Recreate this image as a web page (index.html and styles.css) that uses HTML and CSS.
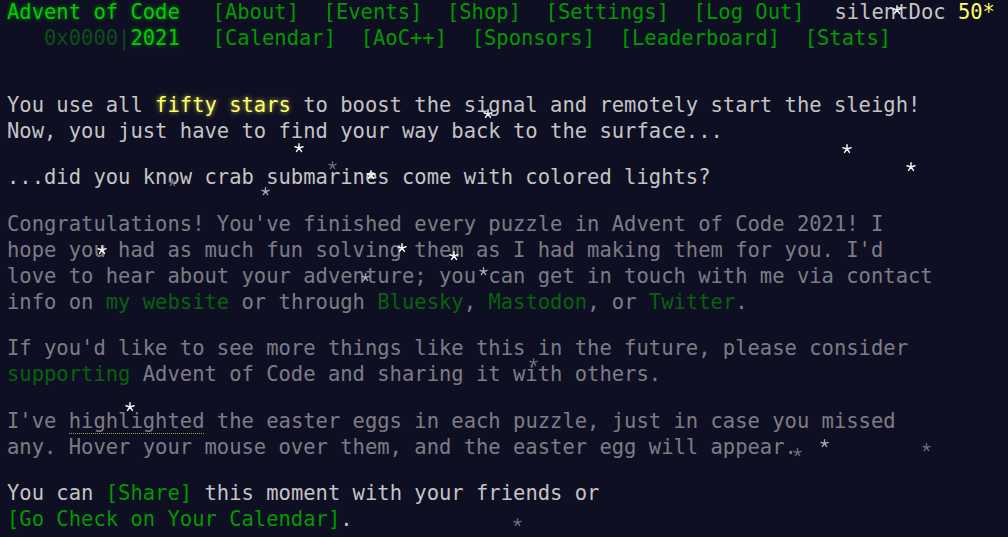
FILE: index.html
```html
<!DOCTYPE html>
<html lang="en">
<head>
<meta charset="utf-8">
<title>Advent of Code 2021</title>
<link rel="stylesheet" href="styles.css">
</head>
<body>
<svg class="defs" width="0" height="0" aria-hidden="true">
  <symbol id="st" viewBox="-5 -5 10 10">
    <path d="M0 0L0-4.2M0 0L4-1.3M0 0L2.47 3.4M0 0L-2.47 3.4M0 0L-4-1.3" fill="none" stroke="currentColor" stroke-width="1.5" stroke-linecap="round"/>
  </symbol>
</svg>
<header>
  <div class="row">
    <h1 class="title-global"><a href="#">Advent of Code</a></h1>
    <nav><ul>
      <li><a href="#">[About]</a></li><li><a href="#">[Events]</a></li><li><a href="#">[Shop]</a></li><li><a href="#">[Settings]</a></li><li><a href="#">[Log Out]</a></li>
    </ul></nav>
    <div class="user">silentDoc <span class="star-count">50*</span></div>
  </div>
  <div class="row">
    <h1 class="title-event"><span class="pad">   </span><span class="wrap">0x0000|</span><a href="#">2021</a></h1>
    <nav><ul>
      <li><a href="#">[Calendar]</a></li><li><a href="#">[AoC++]</a></li><li><a href="#">[Sponsors]</a></li><li><a href="#">[Leaderboard]</a></li><li><a href="#">[Stats]</a></li>
    </ul></nav>
  </div>
</header>
<main>
  <article>
    <p>You use all <em class="star">fifty stars</em> to boost the signal and remotely start the sleigh! Now, you just have to find your way back to the surface...</p>
    <p>...did you know crab submarines come with colored lights?</p>
    <p class="quiet">Congratulations! You've finished every puzzle in Advent of Code 2021! I hope you had as much fun solving them as I had making them for you. I'd love to hear about your adventure; you can get in touch with me via contact info on <a href="#">my website</a> or through <a href="#">Bluesky</a>, <a href="#">Mastodon</a>, or <a href="#">Twitter</a>.</p>
    <p class="quiet">If you'd like to see more things like this in the future, please consider <a href="#">supporting</a> Advent of Code and sharing it with others.</p>
    <p class="quiet">I've <span class="egg">highlighted</span> the easter eggs in each puzzle, just in case you missed any. Hover your mouse over them, and the easter egg will appear.</p>
    <p>You can <a href="#">[Share]</a> this moment with your friends or <a class="nowrap" href="#">[Go Check on Your Calendar]</a>.</p>
  </article>
</main>
<div class="sky" aria-hidden="true">
  <svg class="s b s1"><use href="#st"/></svg>
  <svg class="s b s2"><use href="#st"/></svg>
  <svg class="s b s3"><use href="#st"/></svg>
  <svg class="s b s4"><use href="#st"/></svg>
  <svg class="s b s5"><use href="#st"/></svg>
  <svg class="s d s6"><use href="#st"/></svg>
  <svg class="s d s7"><use href="#st"/></svg>
  <svg class="s b s8"><use href="#st"/></svg>
  <svg class="s m s9"><use href="#st"/></svg>
  <svg class="s b s10"><use href="#st"/></svg>
  <svg class="s b s11"><use href="#st"/></svg>
  <svg class="s b s12"><use href="#st"/></svg>
  <svg class="s m s13"><use href="#st"/></svg>
  <svg class="s m s14"><use href="#st"/></svg>
  <svg class="s d s15"><use href="#st"/></svg>
  <svg class="s b s16"><use href="#st"/></svg>
  <svg class="s m s17"><use href="#st"/></svg>
  <svg class="s d s18"><use href="#st"/></svg>
  <svg class="s d s19"><use href="#st"/></svg>
  <svg class="s d s20"><use href="#st"/></svg>
</div>
</body>
</html>
```
FILE: styles.css
```css
html, body {
  background: #0f0f23;
}
body {
  margin: 0 7px;
  color: #c4c4c4;
  font-family: "DejaVu Sans Mono", "Liberation Mono", monospace;
  font-size: 20.5px;
  line-height: 26px;
  position: relative;
  min-height: 537px;
}
.defs {
  position: absolute;
  width: 0;
  height: 0;
}
a {
  color: #009900;
  text-decoration: none;
}
header {
  margin-top: -1px;
  margin-bottom: 40.5px;
  white-space: nowrap;
}
.row {
  display: flex;
  align-items: baseline;
  height: 26px;
}
h1 {
  font-size: 1em;
  font-weight: normal;
  margin: 0;
  padding-right: 1em;
}
.title-global a,
.title-event a {
  color: #00cc00;
  text-shadow: 0 0 4px rgba(0, 204, 0, 0.6);
}
.title-event .pad {
  white-space: pre;
}
.title-event .wrap {
  color: #00cc00;
  opacity: 0.33;
}
nav ul {
  list-style: none;
  margin: 0;
  padding: 0;
  display: flex;
}
nav li {
  padding: 0 0.6em;
}
.user {
  margin-left: 17.5px;
}
.star-count {
  color: #ffff66;
}
main {
  width: 935px;
}
p {
  margin: 20.5px 0;
}
em.star {
  font-style: normal;
  color: #ffff66;
  text-shadow: 0 0 5px rgba(255, 255, 102, 0.7);
}
.quiet {
  opacity: 0.6;
}
.egg {
  border-bottom: 1px dotted #ffff66;
}
.nowrap {
  white-space: nowrap;
}
.sky {
  position: absolute;
  inset: 0 -7px;
  pointer-events: none;
}
.s {
  position: absolute;
  width: 10px;
  height: 10px;
}
.b { color: #f4f4f4; }
.m { color: #a8a8b0; width: 9px; height: 9px; }
.d { color: #6c6c78; width: 9px; height: 9px; }
.s1  { left: 892px; top: 5px; }
.s2  { left: 483px; top: 109px; }
.s3  { left: 294px; top: 143px; }
.s4  { left: 842px; top: 144px; }
.s5  { left: 906px; top: 162px; }
.s6  { left: 328px; top: 161px; }
.s7  { left: 168px; top: 178px; }
.s8  { left: 366px; top: 170px; }
.s9  { left: 261px; top: 187px; }
.s10 { left: 97px;  top: 245px; }
.s11 { left: 397px; top: 243px; }
.s12 { left: 449px; top: 251px; }
.s13 { left: 361px; top: 273px; }
.s14 { left: 479px; top: 267px; }
.s15 { left: 529px; top: 358px; }
.s16 { left: 125px; top: 402px; }
.s17 { left: 820px; top: 439px; }
.s18 { left: 793px; top: 448px; }
.s19 { left: 922px; top: 443px; }
.s20 { left: 513px; top: 518px; }
```
